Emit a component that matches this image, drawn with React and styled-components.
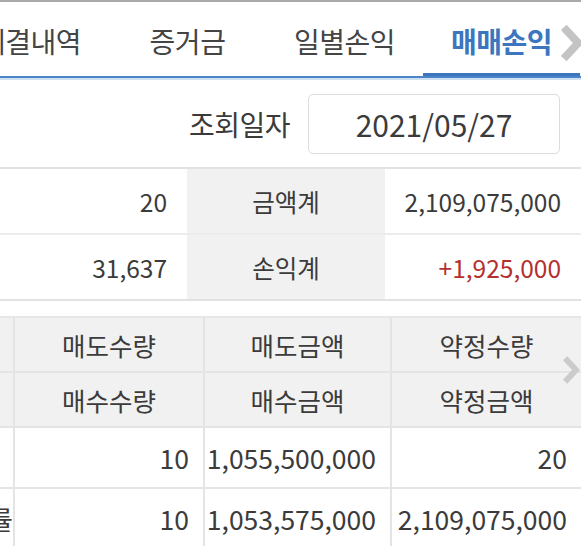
import styled, {createGlobalStyle, css} from "styled-components";

const GlobalStyle = createGlobalStyle`
    html, body {
        margin: 0;
        padding: 0;
        background: #ffffff;
    }
    body {
        font-family: "Noto Sans CJK KR", "Noto Sans", sans-serif;
        color: #3b3b3b;
        overflow: hidden;
    }
`;

const Page = styled.div`
    width: 581px;
    height: 546px;
    overflow: hidden;
    background: #fff;
`;

const TabBar = styled.div`
    position: relative;
    height: 74px;
    border-top: 2px solid #a9a9a9;
    border-bottom: 2px solid #4d84c5;
    box-shadow: 0 2px 0 #cfe0f2;
    overflow: hidden;
`;

const TabTrack = styled.div`
    display: flex;
    height: 100%;
    margin-left: -48px;
`;

const Tab = styled.div`
    flex: none;
    width: 157px;
    display: flex;
    align-items: center;
    justify-content: center;
    padding-top: 4px;
    box-sizing: border-box;
    font-size: 28px;
    letter-spacing: -0.5px;
    color: #444;
    ${({$active}) => $active && css`
        color: #3b76bf;
        font-weight: 700;
        box-shadow: inset 0 -3px 0 #3b76bf;
    `}
`;

const TabArrow = styled.div`
    position: absolute;
    right: -4px;
    top: 21px;
    width: 27px;
    height: 40px;
`;

const DateRow = styled.div`
    height: 87px;
    display: flex;
    align-items: center;
    justify-content: flex-end;
    gap: 18px;
    padding-right: 21px;
    border-bottom: 2px solid #e2e2e2;
    margin-top: 2px;
`;

const DateLabel = styled.span`
    font-size: 28px;
    letter-spacing: -0.5px;
    color: #3b3b3b;
`;

const DateBox = styled.div`
    width: 250px;
    height: 58px;
    border: 1px solid #dcdcdc;
    border-radius: 5px;
    display: flex;
    align-items: center;
    justify-content: center;
    font-size: 30px;
    color: #3b3b3b;
`;

const Summary = styled.div`
    display: grid;
    grid-template-columns: 187px 198px 1fr;
    border-bottom: 2px solid #e2e2e2;
`;

const SumCell = styled.div`
    height: 64px;
    display: flex;
    align-items: center;
    font-size: 24.5px;
    justify-content: ${({$label}) => ($label ? "center" : "flex-end")};
    padding-right: ${({$label}) => ($label ? "0" : "20px")};
    background: ${({$label}) => ($label ? "#f1f1f1" : "#fff")};
    color: ${({$red}) => ($red ? "#b52f2f" : "#3b3b3b")};
    border-bottom: ${({$last}) => ($last ? "none" : "2px solid #ececec")};
`;

const Spacer = styled.div`
    height: 15px;
`;

const TableWrap = styled.div`
    position: relative;
`;

const Grid = styled.div`
    display: grid;
    grid-template-columns: 15px 190px 187px 1fr;
    border-top: 2px solid #e6e6e6;
`;

const Cell = styled.div`
    height: ${({$head}) => ($head ? "53px" : "59px")};
    display: flex;
    align-items: center;
    overflow: hidden;
    white-space: nowrap;
    font-size: ${({$head}) => ($head ? "25.5px" : "26.5px")};
    color: #3b3b3b;
    justify-content: ${({$head}) => ($head ? "center" : "flex-end")};
    padding-right: ${({$head, $stub}) => ($head || $stub ? "0" : "14px")};
    background: ${({$head}) => ($head ? "#f1f1f1" : "#fff")};
    border-right: 2px solid #e4e4e4;
    border-bottom: 2px solid #e4e4e4;
    &:nth-child(4n) {
        border-right: none;
    }
`;

const ScrollArrow = styled.div`
    position: absolute;
    right: 0;
    top: 36px;
    width: 20px;
    height: 36px;
`;

function Chevron({color, width}) {
    return (
        <svg width="100%" height="100%" viewBox="0 0 24 36">
            <path d="M5 4 L18 18 L5 32" fill="none" stroke={color} strokeWidth={width}
                  strokeLinecap="butt" strokeLinejoin="miter"/>
        </svg>
    );
}

const tabs = ["체결내역", "증거금", "일별손익", "매매손익"];

const headRows = [
    ["", "매도수량", "매도금액", "약정수량"],
    ["", "매수수량", "매수금액", "약정금액"],
];

const dataRows = [
    ["", "10", "1,055,500,000", "20"],
    ["손익률", "10", "1,053,575,000", "2,109,075,000"],
];

export default function App() {
    return (
        <Page>
            <GlobalStyle/>
            <TabBar>
                <TabTrack>
                    {tabs.map((t, i) => (
                        <Tab key={t} $active={i === tabs.length - 1}>{t}</Tab>
                    ))}
                </TabTrack>
                <TabArrow><Chevron color="#c4c4c4" width={7}/></TabArrow>
            </TabBar>

            <DateRow>
                <DateLabel>조회일자</DateLabel>
                <DateBox>2021/05/27</DateBox>
            </DateRow>

            <Summary>
                <SumCell>20</SumCell>
                <SumCell $label>금액계</SumCell>
                <SumCell>2,109,075,000</SumCell>
                <SumCell $last>31,637</SumCell>
                <SumCell $label $last>손익계</SumCell>
                <SumCell $last $red>+1,925,000</SumCell>
            </Summary>

            <Spacer/>

            <TableWrap>
                <Grid>
                    {headRows.map((row, r) => row.map((c, i) => (
                        <Cell key={"h" + r + i} $head>{c}</Cell>
                    )))}
                    {dataRows.map((row, r) => row.map((c, i) => (
                        <Cell key={"d" + r + i} $stub={i === 0}>{c}</Cell>
                    )))}
                </Grid>
                <ScrollArrow><Chevron color="#cbcbcb" width={7}/></ScrollArrow>
            </TableWrap>
        </Page>
    );
}
